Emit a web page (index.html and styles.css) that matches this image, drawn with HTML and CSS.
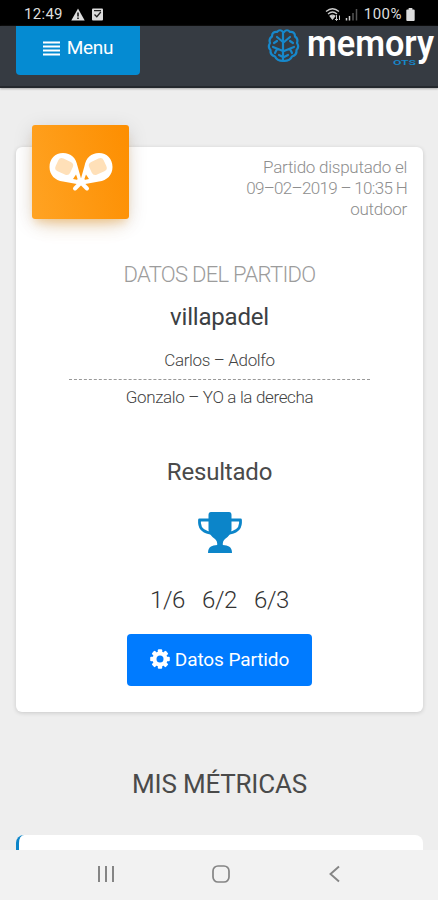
FILE: index.html
```html
<!DOCTYPE html>
<html lang="es">
<head>
<meta charset="utf-8">
<meta name="viewport" content="width=device-width, initial-scale=1">
<title>Memory OTS</title>
<link rel="stylesheet" href="styles.css">
</head>
<body>
<div class="screen">
  <div class="status">
    <div class="status-left">
      <span class="clock">12:49</span>
      <svg width="14" height="13" viewBox="0 0 14 13"><path d="M7 .5 13.7 12.5H.3Z" fill="#ddd"/><path d="M7 4.5v4M7 9.6v1.4" stroke="#000" stroke-width="1.4"/></svg>
      <svg class="check" width="11" height="13" viewBox="0 0 11 13"><rect y=".5" width="11" height="12" rx="1" fill="#ddd"/><path d="M2.5 6.5 4.8 8.7 8.8 4M2 2.6h7" fill="none" stroke="#222" stroke-width="1.3"/></svg>
    </div>
    <div class="status-right">
      <svg width="17" height="15" viewBox="0 0 17 15" fill="none" stroke="#ccc" stroke-width="1.3"><path d="M1 4.5Q7.500-1 14 4.500M3 7Q7.500 3 12 7M5 9.200Q7.500 7 10 9.200"/><path d="M7.500 12 5.500 9.500h4Z" fill="#ccc"/><path d="M11.500 8v5.500M10 12l1.500 1.500L13 12M14.500 13V8.500" stroke-width="1"/></svg>
      <svg class="signal" width="13" height="13" viewBox="0 0 13 13"><path d="M1.500 10v2.500M4.500 8v4.500" stroke="#ccc" stroke-width="1.500"/><path d="M8 5v7.500M11.500 1v11.500" stroke="#555" stroke-width="1.500"/></svg>
      <span>100%</span>
      <svg class="battery" width="9" height="13" viewBox="0 0 9 14"><path d="M2.500 0h4v1.500H8q1 0 1 1V13q0 1-1 1H1q-1 0-1-1V2.500q0-1 1-1h1.500Z" fill="#ddd"/></svg>
    </div>
  </div>

  <header class="topbar">
    <button class="menu-btn">
      <svg width="17" height="15" viewBox="0 0 17 15"><path d="M0 1.500h17M0 5.500h17M0 9.500h17M0 13.500h17" stroke="#fff" stroke-width="2.200"/></svg>
      <span>Menu</span>
    </button>
    <svg class="logo" width="170" height="44" viewBox="0 0 170 44">
      <g fill="none" stroke="#1788cb" stroke-width="2.200" stroke-linecap="round" stroke-linejoin="round" transform="translate(0 1)">
        <path d="M15 5Q12 1.500 9 5Q4 4.500 4 9.500Q.5 12 2 16Q-.5 20 2.500 23Q2 28 7 29.500Q9 34 15 34M15 5v29"/>
        <path d="M16 5Q19 1.500 22 5Q27 4.500 27 9.500Q30.500 12 29 16Q31.500 20 28.500 23Q29 28 24 29.500Q22 34 16 34"/>
        <path d="M9 10 15 15M6 16 9 14M5 20 15 24M9 22 7 26M11 28 15 30"/>
        <path d="M22 10 16 15M25 16 22 14M26 20 16 24M22 22 24 26M20 28 16 30"/>
      </g>
      <text class="logo-name" x="39" y="29.500" textLength="127" lengthAdjust="spacingAndGlyphs">memory</text>
      <text class="logo-sub" x="125" y="38.500" textLength="23" lengthAdjust="spacingAndGlyphs">OTS</text>
    </svg>
  </header>

  <main class="content">
    <section class="card">
      <div class="card-head">
        <div class="tile">
          <svg width="66" height="42" viewBox="0 0 66 42">
            <defs>
              <g id="racket">
                <path d="M1.500 16C1.500 8 7 2 15 2C23 2 28 7 29.500 15L34 31L31.500 33.500L15 30.500C7 29.500 1.500 24 1.500 16Z" fill="#fff"/>
                <path d="M25 28 28 23.500 30 29Z" fill="#ff9b12"/>
                <rect x="8" y="8.500" width="16" height="14" rx="4" fill="#ffe0b8" transform="rotate(25 16 16)"/>
                <path d="M31 29.500 39 37.500" stroke="#fff" stroke-width="4" stroke-linecap="round"/>
              </g>
            </defs>
            <use href="#racket"/>
            <use href="#racket" transform="translate(66 0) scale(-1 1)"/>
          </svg>
        </div>
        <p class="played">Partido disputado el<br><span class="date">09–02–2019 – 10:35 H</span><br>outdoor</p>
      </div>
      <h2 class="label">DATOS DEL PARTIDO</h2>
      <h3 class="club">villapadel</h3>
      <div class="teams">
        <p class="team">Carlos – Adolfo</p>
        <p class="team team-b">Gonzalo – YO a la derecha</p>
      </div>
      <h3 class="result">Resultado</h3>
      <svg class="trophy" width="44" height="41" viewBox="0 0 44 41">
        <path d="M13 0H31Q33.500 0 33.500 3V18Q32 24 27 27Q24.500 29 24.800 33Q29 33 31 34.500Q34 36 34 41H10Q10 36 13 34.500Q15 33 19.200 33Q19.500 29 17 27Q12 24 10.500 18V3Q10.500 0 13 0Z" fill="#0c85c9"/>
        <path d="M11 8H1.500V11Q2 20 14.500 21.500M33 8h9.500V11Q42 20 29.500 21.500" fill="none" stroke="#0c85c9" stroke-width="2.800" stroke-linejoin="round"/>
      </svg>
      <div class="score"><span>1/6</span><span>6/2</span><span>6/3</span></div>
      <button class="data-btn">
        <svg width="20" height="20" viewBox="-10 -10 20 20">
          <g fill="#fff"><rect x="-2.200" y="-9.800" width="4.400" height="19.600" rx="1"/><rect x="-2.200" y="-9.800" width="4.400" height="19.600" rx="1" transform="rotate(45)"/><rect x="-2.200" y="-9.800" width="4.400" height="19.600" rx="1" transform="rotate(90)"/><rect x="-2.200" y="-9.800" width="4.400" height="19.600" rx="1" transform="rotate(135)"/><circle r="7.500"/></g>
          <circle r="3.500" fill="#007bff"/>
        </svg>
        <span>Datos Partido</span>
      </button>
    </section>
    <h2 class="metrics-title">MIS MÉTRICAS</h2>
    <section class="metric-card"></section>
  </main>

  <nav class="navbar">
    <svg width="18" height="18" viewBox="0 0 18 18"><path d="M2 1v16M9 1v16M16 1v16" stroke="#858585" stroke-width="2"/></svg>
    <svg width="18" height="18" viewBox="0 0 18 18"><rect x="1" y="1" width="16" height="16" rx="5" fill="none" stroke="#858585" stroke-width="1.700"/></svg>
    <svg width="18" height="18" viewBox="0 0 18 18"><path d="M13 1.500 4.500 9 13 16.500" fill="none" stroke="#858585" stroke-width="1.900"/></svg>
  </nav>
</div>
</body>
</html>
```
FILE: styles.css
```css
* { box-sizing: border-box; }
body { margin: 0; font-family: Roboto, sans-serif; background: #eee; }
h2, h3, p { margin: 0; font-weight: 400; }
button { border: 0; font: inherit; color: #fff; display: flex; align-items: center; justify-content: center; }
svg { display: block; flex: none; }

.screen { width: 438px; height: 900px; display: flex; flex-direction: column; overflow: hidden; }

.status { height: 26px; flex: none; background: #000; color: #ddd; display: flex; justify-content: space-between; padding: 2px 23px 0 24px; font-size: 15px; }
.status-left, .status-right { display: flex; align-items: center; }
.status-right { letter-spacing: .5px; }
.clock { width: 47px; letter-spacing: .3px; }
.check { margin-left: 7px; }
.signal { margin: 0 6px 0 3px; }
.battery { margin-left: 4px; }

.topbar { height: 62px; flex: none; background: #363b42; border-bottom: 2px solid #25292e; display: flex; justify-content: space-between; align-items: flex-start; padding-left: 16px; box-shadow: 0 1px 2px #aaa; }
.menu-btn { width: 124px; height: 49px; padding: 0 0 7px; gap: 7px; border-radius: 0 0 4px 4px; background: #058bd2; font-size: 19px; letter-spacing: -.3px; }
.menu-btn svg { margin-top: 3px; }
.logo { overflow: visible; }
.logo-name { font: 600 36px Roboto, sans-serif; fill: #fff; }
.logo-sub { font: 600 8px Roboto, sans-serif; fill: #1788cb; }

.content { flex: 1; min-height: 0; overflow: hidden; padding: 59px 15px 0 16px; }
.card { height: 565px; background: #fff; border-radius: 6px; box-shadow: 0 1px 4px rgba(0, 0, 0, .16); display: flex; flex-direction: column; align-items: center; }
.card-head { width: 100%; height: 116px; flex: none; display: flex; justify-content: space-between; align-items: flex-start; padding: 0 16px; }
.tile { width: 97px; height: 94px; margin-top: -22px; border-radius: 3px; background: linear-gradient(75deg, #ffa323, #fd8e00); box-shadow: 0 12px 20px -10px rgba(255, 152, 0, .3), 0 4px 20px rgba(0, 0, 0, .13), 0 6px 8px -3px rgba(255, 152, 0, .25); display: flex; align-items: center; justify-content: center; }
.played { margin-top: 10px; text-align: right; font-size: 17px; line-height: 21px; font-weight: 300; color: #8e8e8e; letter-spacing: -.25px; }
.date { letter-spacing: -.68px; }
.label { font-size: 22px; line-height: 24px; font-weight: 300; color: #9c9c9c; letter-spacing: -.7px; }
.club { margin-top: 16px; font-size: 24px; line-height: 28px; color: #3c4043; letter-spacing: -.2px; }
.teams { width: 301px; margin-top: 17px; text-align: center; font-size: 17px; line-height: 24px; color: #444; }
.team { padding-bottom: 7px; font-weight: 300; letter-spacing: -.35px; }
.team-b { padding-top: 5px; border-top: 1px dashed #999; }
.result { margin-top: 42px; font-size: 24px; line-height: 28px; color: #4a4a4a; letter-spacing: -.2px; }
.trophy { margin-top: 26px; }
.score { margin-top: 32px; display: flex; gap: 17px; font-size: 24px; line-height: 30px; font-weight: 300; color: #333; letter-spacing: -.4px; }
.data-btn { width: 185px; height: 52px; flex: none; margin-top: 19px; padding: 0 0 2px; border-radius: 4px; background: #007bff; font-size: 19px; gap: 5px; letter-spacing: -.1px; }

.metrics-title { margin-top: 56px; text-align: center; font-size: 26px; line-height: 32px; color: #4a4a4a; letter-spacing: -.2px; }
.metric-card { height: 90px; margin-top: 35px; background: #fff; border-left: 3px solid #0c85c9; border-radius: 8px; }

.navbar { height: 50px; flex: none; background: #f2f2f2; display: flex; justify-content: space-between; align-items: center; padding: 0 94px 2px 97px; }
```
